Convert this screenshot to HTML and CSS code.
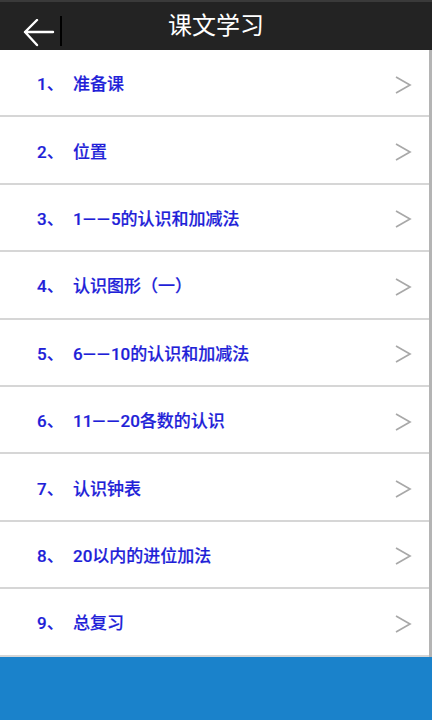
FILE: index.html
```html
<!DOCTYPE html>
<html lang="zh">
<head>
<meta charset="utf-8">
<link rel="stylesheet" href="styles.css">
</head>
<body>
<div class="app">
  <header class="topbar">
    <div class="back">
      <svg width="34" height="30" viewBox="0 0 34 30">
        <path d="M3 13 H31 M15 1 L3 13 L15 26" fill="none" stroke="#fff" stroke-width="2.4" stroke-linecap="round" stroke-linejoin="round"/>
      </svg>
      <span class="sep"></span>
    </div>
    <h1 class="title">课文学习</h1>
  </header>
  <ul class="list">
    <li class="row"><span class="num">1、</span><span class="name">准备课</span><svg class="chev" viewBox="0 0 18 20"><polyline points="2,2 16,10 2,18"/></svg></li>
    <li class="row"><span class="num">2、</span><span class="name">位置</span><svg class="chev" viewBox="0 0 18 20"><polyline points="2,2 16,10 2,18"/></svg></li>
    <li class="row"><span class="num">3、</span><span class="name">1<span class="dash">——</span>5的认识和加减法</span><svg class="chev" viewBox="0 0 18 20"><polyline points="2,2 16,10 2,18"/></svg></li>
    <li class="row"><span class="num">4、</span><span class="name">认识图形（一）</span><svg class="chev" viewBox="0 0 18 20"><polyline points="2,2 16,10 2,18"/></svg></li>
    <li class="row"><span class="num">5、</span><span class="name">6<span class="dash">——</span>10的认识和加减法</span><svg class="chev" viewBox="0 0 18 20"><polyline points="2,2 16,10 2,18"/></svg></li>
    <li class="row"><span class="num">6、</span><span class="name">11<span class="dash">——</span>20各数的认识</span><svg class="chev" viewBox="0 0 18 20"><polyline points="2,2 16,10 2,18"/></svg></li>
    <li class="row"><span class="num">7、</span><span class="name">认识钟表</span><svg class="chev" viewBox="0 0 18 20"><polyline points="2,2 16,10 2,18"/></svg></li>
    <li class="row"><span class="num">8、</span><span class="name">20以内的进位加法</span><svg class="chev" viewBox="0 0 18 20"><polyline points="2,2 16,10 2,18"/></svg></li>
    <li class="row"><span class="num">9、</span><span class="name">总复习</span><svg class="chev" viewBox="0 0 18 20"><polyline points="2,2 16,10 2,18"/></svg></li>
  </ul>
  <footer class="footer"></footer>
</div>
</body>
</html>
```

FILE: styles.css
```css
* { box-sizing: border-box; margin: 0; padding: 0; }
html, body { width: 432px; height: 720px; overflow: hidden; background: #fff; }
body { font-family: Roboto, "Noto Sans CJK SC", "Noto Sans", sans-serif; }
.app { display: flex; flex-direction: column; height: 720px; }
.topbar {
  position: relative;
  height: 50px;
  background: #232323;
  border-top: 2px solid #3a3a3a;
  display: flex;
  align-items: center;
  justify-content: center;
  flex-shrink: 0;
}
.back {
  position: absolute;
  left: 22px;
  top: 14px;
  display: flex;
  align-items: flex-start;
}
.back svg { display: block; margin-top: 3px; }
.sep { display: block; width: 2px; height: 30px; background: #000; margin-left: 4px; }
.title {
  color: #fff;
  font-family: "Noto Sans CJK SC", sans-serif;
  font-size: 24px;
  font-weight: 400;
  line-height: 1;
  margin-top: -4px;
}
.list {
  list-style: none;
  border-right: 3px solid #b4b4b4;
  flex-shrink: 0;
}
.row {
  height: 67.4px;
  border-bottom: 2px solid #d6d6d6;
  display: flex;
  align-items: center;
  padding-left: 37px;
  color: #1f1fd8;
  font-size: 17px;
  font-weight: 500;
  -webkit-text-stroke: 0.2px #1f1fd8;
}
.num { width: 36px; }
.name { flex: 1; }
.dash { font-family: Roboto, sans-serif; letter-spacing: 1px; }
.chev {
  width: 18px;
  height: 20px;
  margin-right: 17px;
  margin-top: 4px;
  fill: none;
  stroke: #a8a8a8;
  stroke-width: 1.7;
}
.footer {
  flex: 1;
  background: #1a82cb;
}
```
